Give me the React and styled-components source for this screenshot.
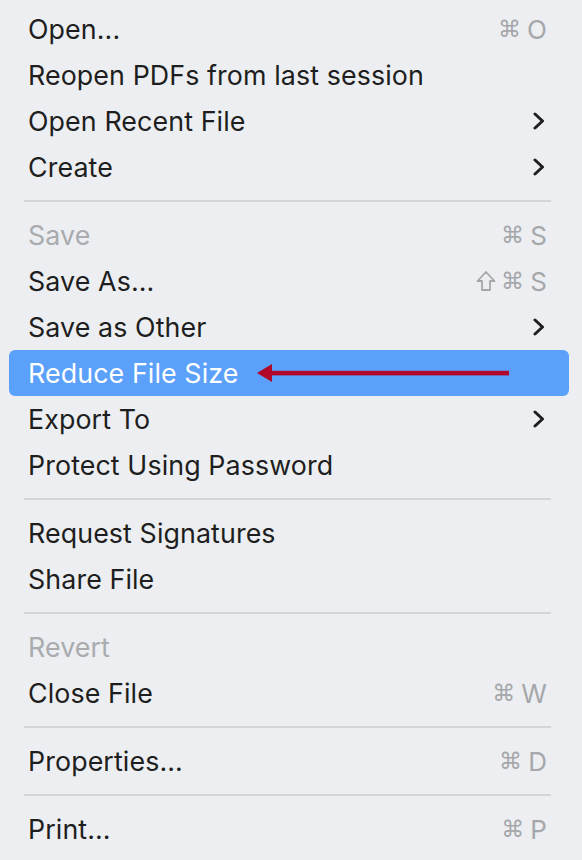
import React from "react";
import styled, { createGlobalStyle } from "styled-components";

const Global = createGlobalStyle`
  html, body { margin: 0; padding: 0; background: #eceef1; }
  body { font-family: Inter, "Noto Sans", "DejaVu Sans", sans-serif; }
`;

const Menu = styled.div`
  width: 582px;
  height: 860px;
  box-sizing: border-box;
  padding: 6px 13px 0 9px;
  background: #eceef1;
  display: flex;
  flex-direction: column;
`;

const Row = styled.div`
  position: relative;
  height: 46px;
  flex: 0 0 46px;
  display: flex;
  align-items: center;
  padding: 0 22px 0 19px;
  border-radius: 6px;
  background: ${(p) => (p.$active ? "#5ba0fa" : "transparent")};
  color: ${(p) => (p.$active ? "#ffffff" : p.$disabled ? "#a9abae" : "#1e1e20")};
  font-size: 26.8px;
  letter-spacing: 0.1px;
`;

const Label = styled.span`
  flex: 1;
  white-space: nowrap;
`;

const Shortcut = styled.span`
  display: flex;
  align-items: center;
  gap: 6px;
  color: #a5a7aa;
  font-size: 26px;
`;

const Keys = styled.span`
  display: flex;
  align-items: center;
  gap: 5px;
`;

const Glyph = styled.span`
  font-family: "DejaVu Sans", sans-serif;
  font-size: 23px;
  line-height: 1;
`;

const ShiftIcon = styled.svg`
  width: 20px;
  height: 22px;
`;

const Chevron = styled.svg`
  width: 12px;
  height: 18px;
  margin-right: 2px;
`;

const Separator = styled.div`
  flex: 0 0 22px;
  height: 22px;
  display: flex;
  align-items: center;
  padding: 0 18px 0 15px;
  &::after {
    content: "";
    flex: 1;
    height: 2px;
    background: #d2d4d7;
  }
`;

const Arrow = styled.svg`
  position: absolute;
  left: 238px;
  top: 13px;
  width: 264px;
  height: 20px;
`;

const ChevronIcon = () => (
  <Chevron viewBox="0 0 12 18">
    <path d="M2 2 L9.5 9 L2 16" fill="none" stroke="#1e1e20" strokeWidth="3" strokeLinecap="round" strokeLinejoin="round" />
  </Chevron>
);

const Shift = () => (
  <ShiftIcon viewBox="0 0 20 22">
    <path
      d="M10 2 L18.5 11 L14 11 L14 20 L6 20 L6 11 L1.5 11 Z"
      fill="none"
      stroke="#a5a7aa"
      strokeWidth="1.8"
      strokeLinejoin="round"
    />
  </ShiftIcon>
);

const items = [
  { label: "Open...", keys: ["⌘"], key: "O" },
  { label: "Reopen PDFs from last session" },
  { label: "Open Recent File", sub: true },
  { label: "Create", sub: true },
  "sep",
  { label: "Save", keys: ["⌘"], key: "S", disabled: true },
  { label: "Save As...", keys: ["⇧", "⌘"], key: "S" },
  { label: "Save as Other", sub: true },
  { label: "Reduce File Size", active: true },
  { label: "Export To", sub: true },
  { label: "Protect Using Password" },
  "sep",
  { label: "Request Signatures" },
  { label: "Share File" },
  "sep",
  { label: "Revert", disabled: true },
  { label: "Close File", keys: ["⌘"], key: "W" },
  "sep",
  { label: "Properties...", keys: ["⌘"], key: "D" },
  "sep",
  { label: "Print...", keys: ["⌘"], key: "P" },
];

export default function App() {
  return (
    <>
      <Global />
      <Menu>
        {items.map((it, i) =>
          it === "sep" ? (
            <Separator key={i} />
          ) : (
            <Row key={i} $active={it.active} $disabled={it.disabled}>
              <Label>{it.label}</Label>
              {it.key && (
                <Shortcut>
                  <Keys>
                    {it.keys.map((g, j) =>
                      g === "⇧" ? <Shift key={j} /> : <Glyph key={j}>{g}</Glyph>
                    )}
                  </Keys>
                  <span>{it.key}</span>
                </Shortcut>
              )}
              {it.sub && <ChevronIcon />}
              {it.active && (
                <Arrow viewBox="0 0 264 20">
                  <polygon points="10,10 25,1 25,19" fill="#b1072a" />
                  <rect x="22" y="7.8" width="240" height="4.6" fill="#b1072a" />
                </Arrow>
              )}
            </Row>
          )
        )}
      </Menu>
    </>
  );
}
